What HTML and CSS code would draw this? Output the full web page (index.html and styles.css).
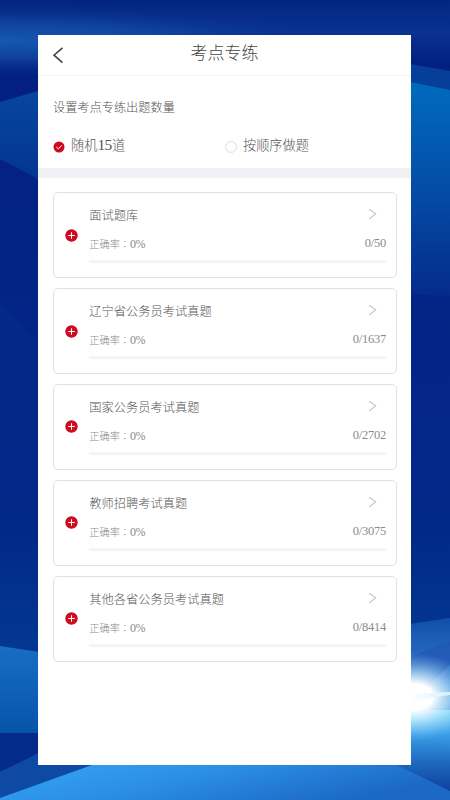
FILE: index.html
```html
<!DOCTYPE html>
<html lang="zh-CN">
<head>
<meta charset="utf-8">
<title>考点专练</title>
<link rel="stylesheet" href="styles.css">
</head>
<body>
<svg class="backdrop" viewBox="0 0 450 800" preserveAspectRatio="none" aria-hidden="true">
  <defs>
    <linearGradient id="base" x1="0" y1="0" x2="0" y2="1"><stop offset="0" stop-color="#032582"/><stop offset=".04" stop-color="#0a3290"/><stop offset=".08" stop-color="#032080"/><stop offset=".5" stop-color="#032688"/><stop offset=".66" stop-color="#022888"/><stop offset=".78" stop-color="#02358f"/><stop offset="1" stop-color="#0846a0"/></linearGradient>
    <radialGradient id="haze"><stop offset="0" stop-color="#1558b0"/><stop offset=".5" stop-color="#1450a8" stop-opacity=".65"/><stop offset="1" stop-color="#0a3695" stop-opacity="0"/></radialGradient>
    <linearGradient id="facet" x1="0" y1="0" x2="0" y2="1"><stop offset="0" stop-color="#07469f"/><stop offset="1" stop-color="#033591"/></linearGradient>
    <linearGradient id="right" x1="0" y1="0" x2="0" y2="1"><stop offset="0" stop-color="#006abd"/><stop offset=".45" stop-color="#0450a9"/><stop offset="1" stop-color="#052b8b"/></linearGradient>
    <linearGradient id="left" x1="0" y1="0" x2="0" y2="1"><stop offset="0" stop-color="#186ec4"/><stop offset="1" stop-color="#0753aa"/></linearGradient>
    <linearGradient id="floor" x1="0" y1="0" x2="1" y2=".35"><stop offset="0" stop-color="#34a5f5"/><stop offset=".45" stop-color="#2c90e6"/><stop offset="1" stop-color="#1c69c5"/></linearGradient>
    <linearGradient id="rays" x1="0" y1="0" x2="0" y2="1"><stop offset="0" stop-color="#0f4fab"/><stop offset="1" stop-color="#4a90dc"/></linearGradient>
    <linearGradient id="under" x1="0" y1="0" x2="0" y2="1"><stop offset="0" stop-color="#82dcfa"/><stop offset=".3" stop-color="#3b9de6"/><stop offset=".65" stop-color="#1c68bf"/><stop offset="1" stop-color="#103f9b"/></linearGradient>
    <radialGradient id="flare"><stop offset="0" stop-color="#fff"/><stop offset=".3" stop-color="#fff"/><stop offset=".55" stop-color="#c8edff" stop-opacity=".7"/><stop offset="1" stop-color="#78c4f5" stop-opacity="0"/></radialGradient>
    <linearGradient id="streak" x1="0" y1="0" x2="1" y2="0"><stop offset="0" stop-color="#fff"/><stop offset="1" stop-color="#d4f3ff"/></linearGradient>
  </defs>
  <rect width="450" height="800" fill="url(#base)"/>
  <ellipse cx="0" cy="41" rx="330" ry="35" fill="url(#haze)"/>
  <path d="M0 102L38 91V179L0 159Z" fill="url(#facet)"/>
  <path d="M0 302L38 344V444L0 449Z" fill="#042888"/>
  <path d="M410 64L450 71V92L410 84Z" fill="#063f99"/>
  <path d="M410 82L450 90V296L410 294Z" fill="url(#right)"/>
  <path d="M0 646L39 652V734H0Z" fill="url(#left)"/>
  <path d="M0 733H39V753L0 772Z" fill="#052b8a"/>
  <path d="M0 772L39 753H125L0 800Z" fill="#0e49a4"/>
  <path d="M410 624L450 618V712H410Z" fill="url(#rays)"/>
  <path d="M410 657L450 641V665L410 704Z" fill="#2357b5" fill-opacity=".8"/>
  <path d="M410 710H450V792L397 765Z" fill="url(#under)"/>
  <path d="M0 798L92 765H397L450 791V800H0Z" fill="url(#floor)"/>
  <ellipse cx="414" cy="697" rx="62" ry="44" fill="url(#flare)"/>
  <path d="M410 694L450 692V695L410 701Z" fill="url(#streak)"/>
</svg>

<main class="panel">
  <header class="topbar">
    <svg class="back" viewBox="0 0 12 18"><path d="M10.5 1.8L2 9.2L10.5 16.6"/></svg>
    <h1>考点专练</h1>
  </header>
  <section class="settings">
    <h2>设置考点专练出题数量</h2>
    <div class="options">
      <div class="option"><svg class="radio checked" viewBox="0 0 12 12"><circle cx="6" cy="6" r="5.5"/><path d="M3.3 6L5.2 7.8L8.8 4.4"/></svg><span>随机<b>15</b>道</span></div>
      <div class="option"><svg class="radio" viewBox="0 0 12 12"><circle cx="6" cy="6" r="5.4"/></svg><span>按顺序做题</span></div>
    </div>
  </section>
  <section class="cards">
    <article class="card">
      <svg class="plus" viewBox="0 0 13 13"><circle cx="6.5" cy="6.5" r="6.2"/><path d="M3.2 6.5H9.8M6.5 3.2V9.8"/></svg>
      <div class="body"><div class="row"><h3>面试题库</h3><svg class="arrow" viewBox="0 0 9 12"><path d="M1.3 1.2L7.7 6L1.3 10.8"/></svg></div><div class="stats"><span class="rate">正确率<i lang="zh-TW">：</i><b>0%</b></span><span class="count">0/50</span></div><div class="bar"></div></div>
    </article>
    <article class="card">
      <svg class="plus" viewBox="0 0 13 13"><circle cx="6.5" cy="6.5" r="6.2"/><path d="M3.2 6.5H9.8M6.5 3.2V9.8"/></svg>
      <div class="body"><div class="row"><h3>辽宁省公务员考试真题</h3><svg class="arrow" viewBox="0 0 9 12"><path d="M1.3 1.2L7.7 6L1.3 10.8"/></svg></div><div class="stats"><span class="rate">正确率<i lang="zh-TW">：</i><b>0%</b></span><span class="count">0/1637</span></div><div class="bar"></div></div>
    </article>
    <article class="card">
      <svg class="plus" viewBox="0 0 13 13"><circle cx="6.5" cy="6.5" r="6.2"/><path d="M3.2 6.5H9.8M6.5 3.2V9.8"/></svg>
      <div class="body"><div class="row"><h3>国家公务员考试真题</h3><svg class="arrow" viewBox="0 0 9 12"><path d="M1.3 1.2L7.7 6L1.3 10.8"/></svg></div><div class="stats"><span class="rate">正确率<i lang="zh-TW">：</i><b>0%</b></span><span class="count">0/2702</span></div><div class="bar"></div></div>
    </article>
    <article class="card">
      <svg class="plus" viewBox="0 0 13 13"><circle cx="6.5" cy="6.5" r="6.2"/><path d="M3.2 6.5H9.8M6.5 3.2V9.8"/></svg>
      <div class="body"><div class="row"><h3>教师招聘考试真题</h3><svg class="arrow" viewBox="0 0 9 12"><path d="M1.3 1.2L7.7 6L1.3 10.8"/></svg></div><div class="stats"><span class="rate">正确率<i lang="zh-TW">：</i><b>0%</b></span><span class="count">0/3075</span></div><div class="bar"></div></div>
    </article>
    <article class="card">
      <svg class="plus" viewBox="0 0 13 13"><circle cx="6.5" cy="6.5" r="6.2"/><path d="M3.2 6.5H9.8M6.5 3.2V9.8"/></svg>
      <div class="body"><div class="row"><h3>其他各省公务员考试真题</h3><svg class="arrow" viewBox="0 0 9 12"><path d="M1.3 1.2L7.7 6L1.3 10.8"/></svg></div><div class="stats"><span class="rate">正确率<i lang="zh-TW">：</i><b>0%</b></span><span class="count">0/8414</span></div><div class="bar"></div></div>
    </article>
  </section>
</main>
</body>
</html>
```

FILE: styles.css
```css
* { box-sizing: border-box; }
html, body { margin: 0; height: 800px; overflow: hidden; }
body {
  padding: 35px 39px 35px 38px;
  font-family: "KaiTi", "Kaiti SC", "STKaiti", "Liberation Serif", "Noto Sans CJK SC", serif;
  font-weight: 300;
  color: #555;
  background: #032585;
}
h1, h2, h3 { margin: 0; font-weight: 300; }
b { font-weight: 300; }
i { font-style: normal; font-family: "Noto Sans CJK TC", sans-serif; }
svg { display: block; fill: none; flex: none; }
.backdrop { position: absolute; inset: 0; width: 450px; height: 800px; z-index: -1; }
.panel { height: 730px; background: #fff; }

.topbar {
  display: grid;
  grid-template-columns: 40px 1fr 40px;
  align-items: center;
  height: 41px;
  border-bottom: 1px solid #f3f3f4;
}
.back { width: 12px; height: 18px; margin-left: 14px; stroke: #444; stroke-width: 1.6; }
.topbar h1 { font-size: 17px; line-height: 24px; margin-top: -3px; text-align: center; color: #444; }

.settings { height: 102px; padding: 22px 15px 0; border-bottom: 10px solid #f0f0f5; }
.settings h2 { font-size: 12.2px; line-height: 20px; }
.options { display: grid; grid-template-columns: 172px 1fr; margin-top: 18px; }
.option { display: flex; align-items: center; gap: 6px; height: 22px; font-size: 13.2px; line-height: 20px; }
.option span { margin-top: -2px; }
.option b { font-size: 15.5px; line-height: 16px; letter-spacing: -.7px; margin-right: .6px; }
.radio { width: 12px; height: 12px; stroke: #d4d4d4; stroke-width: .8; }
.radio.checked circle { fill: #cf0a20; stroke: none; }
.radio.checked path { stroke: #fff; stroke-width: 1; }

.cards { display: grid; gap: 9.8px; padding: 14.4px 14px 0 15px; }
.card {
  display: flex;
  align-items: center;
  height: 86px;
  padding: 0 10px 0 11px;
  border: 1px solid #e1e1e1;
  border-radius: 5px;
}
.plus { width: 13px; height: 13px; }
.plus circle { fill: #cf0a20; }
.plus path { stroke: #fff; stroke-width: 1.1; }
.body { flex: 1; height: 84px; margin-left: 11.3px; padding-top: 12px; }
.row { display: flex; justify-content: space-between; height: 20px; }
.row h3 { font-size: 12.25px; line-height: 22px; }
.arrow { width: 9px; height: 12px; margin: 3px 9.5px 0 0; stroke: #c5c5c5; stroke-width: 1.1; }
.stats { display: flex; justify-content: space-between; height: 20px; margin-top: 8px; color: #8b8b8b; }
.rate { font-size: 10.2px; line-height: 22px; }
.rate b { font-size: 12px; letter-spacing: -.6px; }
.count { font-size: 12.5px; line-height: 21px; letter-spacing: -.25px; }
.bar { height: 3px; margin-top: 7px; border-radius: 2px; background: #f4f4f4; }
```
